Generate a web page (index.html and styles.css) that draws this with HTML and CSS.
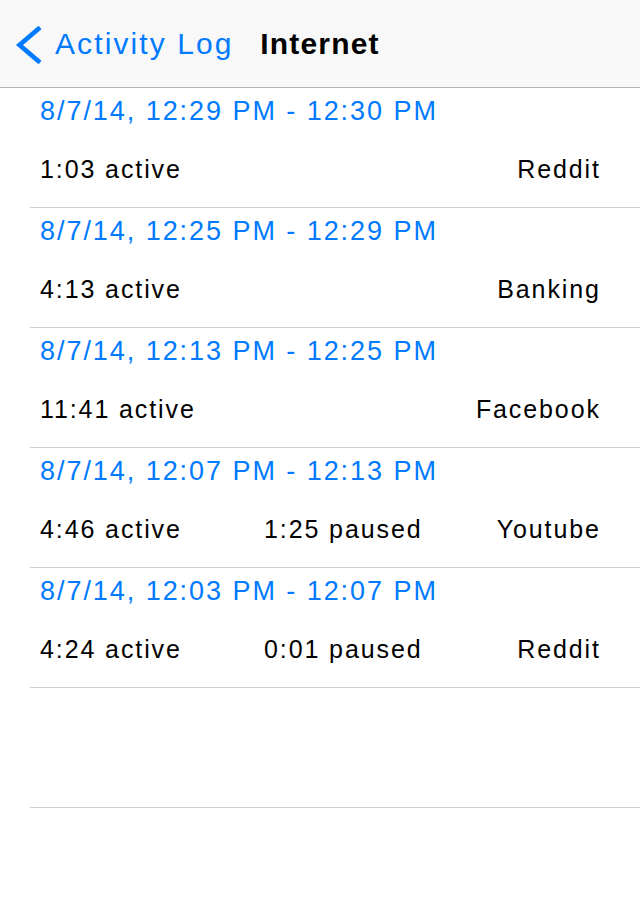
FILE: index.html
```html
<!DOCTYPE html>
<html>
<head>
<meta charset="utf-8">
<link rel="stylesheet" href="styles.css">
</head>
<body>
<header class="nav">
  <a class="back">
    <svg class="chev" width="28" height="40" viewBox="0 0 28 40"><path d="M25 2.5 L4.5 20 L25 37.5" fill="none" stroke="#007aff" stroke-width="4.6" stroke-linecap="butt" stroke-linejoin="miter"/></svg>
    <span class="back-label">Activity Log</span>
  </a>
  <h1 class="title">Internet</h1>
  <span></span>
</header>
<ul class="list">
  <li class="row">
    <div class="date">8/7/14, 12:29 PM - 12:30 PM</div>
    <div class="stats"><span>1:03 active</span><span></span><span class="site">Reddit</span></div>
  </li>
  <li class="row">
    <div class="date">8/7/14, 12:25 PM - 12:29 PM</div>
    <div class="stats"><span>4:13 active</span><span></span><span class="site">Banking</span></div>
  </li>
  <li class="row">
    <div class="date">8/7/14, 12:13 PM - 12:25 PM</div>
    <div class="stats"><span>11:41 active</span><span></span><span class="site">Facebook</span></div>
  </li>
  <li class="row">
    <div class="date">8/7/14, 12:07 PM - 12:13 PM</div>
    <div class="stats"><span>4:46 active</span><span>1:25 paused</span><span class="site">Youtube</span></div>
  </li>
  <li class="row">
    <div class="date">8/7/14, 12:03 PM - 12:07 PM</div>
    <div class="stats"><span>4:24 active</span><span>0:01 paused</span><span class="site">Reddit</span></div>
  </li>
  <li class="row empty"></li>
</ul>
</body>
</html>
```
FILE: styles.css
```css
html, body {
  margin: 0;
  padding: 0;
  background: #ffffff;
  font-family: "Liberation Sans", Arial, Helvetica, sans-serif;
}

.nav {
  height: 87px;
  background: #f8f8f8;
  border-bottom: 1px solid #b4b4b4;
  display: grid;
  grid-template-columns: 1fr auto 1fr;
  align-items: center;
}

.back {
  display: flex;
  align-items: center;
  padding-left: 15px;
  color: #007aff;
}

.chev {
  display: block;
  margin-top: 2px;
}

.back-label {
  margin-left: 12px;
  font-size: 30px;
  line-height: 36px;
  letter-spacing: 2.1px;
}

.title {
  margin: 0;
  font-size: 30px;
  line-height: 36px;
  font-weight: bold;
  letter-spacing: 1.2px;
  color: #000;
}

.list {
  list-style: none;
  margin: 0;
  padding: 0;
}

.row {
  height: 120px;
  box-sizing: border-box;
  margin-left: 30px;
  padding: 7px 41px 0 10px;
  border-bottom: 1px solid #cfcfd3;
}

.date {
  color: #007aff;
  font-size: 27px;
  line-height: 32px;
  letter-spacing: 1.95px;
  white-space: nowrap;
}

.stats {
  margin-top: 27px;
  display: grid;
  grid-template-columns: 224px 1fr auto;
  font-size: 25px;
  line-height: 30px;
  letter-spacing: 1.9px;
  color: #000;
  white-space: nowrap;
}

.site {
  text-align: right;
  margin-right: -1.9px;
}
```
